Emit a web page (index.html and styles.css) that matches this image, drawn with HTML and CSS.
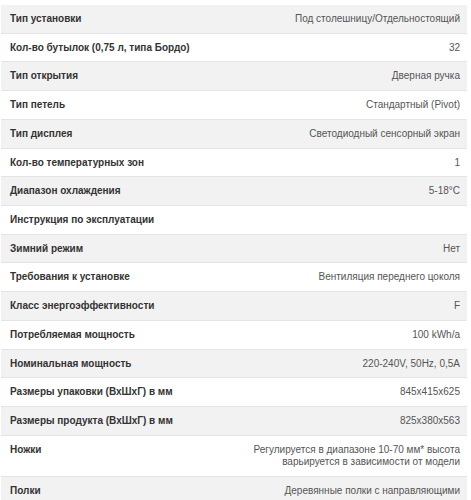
FILE: index.html
```html
<!DOCTYPE html>
<html lang="ru">
<head>
<meta charset="utf-8">
<link rel="stylesheet" href="styles.css">
</head>
<body>
<div class="specs">
  <div class="row odd"><div class="label">Тип установки</div><div class="value">Под столешницу/Отдельностоящий</div></div>
  <div class="row"><div class="label">Кол-во бутылок (0,75 л, типа Бордо)</div><div class="value">32</div></div>
  <div class="row odd"><div class="label">Тип открытия</div><div class="value">Дверная ручка</div></div>
  <div class="row"><div class="label">Тип петель</div><div class="value">Стандартный (Pivot)</div></div>
  <div class="row odd"><div class="label">Тип дисплея</div><div class="value">Светодиодный сенсорный экран</div></div>
  <div class="row"><div class="label">Кол-во температурных зон</div><div class="value">1</div></div>
  <div class="row odd"><div class="label">Диапазон охлаждения</div><div class="value">5-18°C</div></div>
  <div class="row"><div class="label">Инструкция по эксплуатации</div><div class="value"></div></div>
  <div class="row odd"><div class="label">Зимний режим</div><div class="value">Нет</div></div>
  <div class="row"><div class="label">Требования к установке</div><div class="value">Вентиляция переднего цоколя</div></div>
  <div class="row odd"><div class="label">Класс энергоэффективности</div><div class="value">F</div></div>
  <div class="row"><div class="label">Потребляемая мощность</div><div class="value">100 kWh/a</div></div>
  <div class="row odd"><div class="label">Номинальная мощность</div><div class="value">220-240V, 50Hz, 0,5A</div></div>
  <div class="row"><div class="label">Размеры упаковки (ВхШхГ) в мм</div><div class="value">845x415x625</div></div>
  <div class="row odd"><div class="label">Размеры продукта (ВхШхГ) в мм</div><div class="value">825x380x563</div></div>
  <div class="row"><div class="label">Ножки</div><div class="value">Регулируется в диапазоне 10-70 мм* высота<br>варьируется в зависимости от модели</div></div>
  <div class="row odd"><div class="label">Полки</div><div class="value">Деревянные полки с направляющими</div></div>
</div>
</body>
</html>
```

FILE: styles.css
```css
html, body {
  margin: 0;
  padding: 0;
  background: #ffffff;
}

body {
  padding: 5px 4px 0 1px;
  font-family: "Liberation Sans", Arial, sans-serif;
  font-size: 10px;
}

.specs {
  display: flex;
  flex-direction: column;
  width: 466px;
}

.row {
  display: flex;
  justify-content: space-between;
  align-items: flex-start;
  padding: 8px 7px 7.73px 9px;
  line-height: 12px;
  border-bottom: 1px solid #e4e4e4;
  background: #ffffff;
}

.row.odd {
  background: #f2f2f2;
}

.label {
  font-weight: bold;
  color: #333333;
  white-space: nowrap;
}

.value {
  color: #555555;
  text-align: right;
}
```
